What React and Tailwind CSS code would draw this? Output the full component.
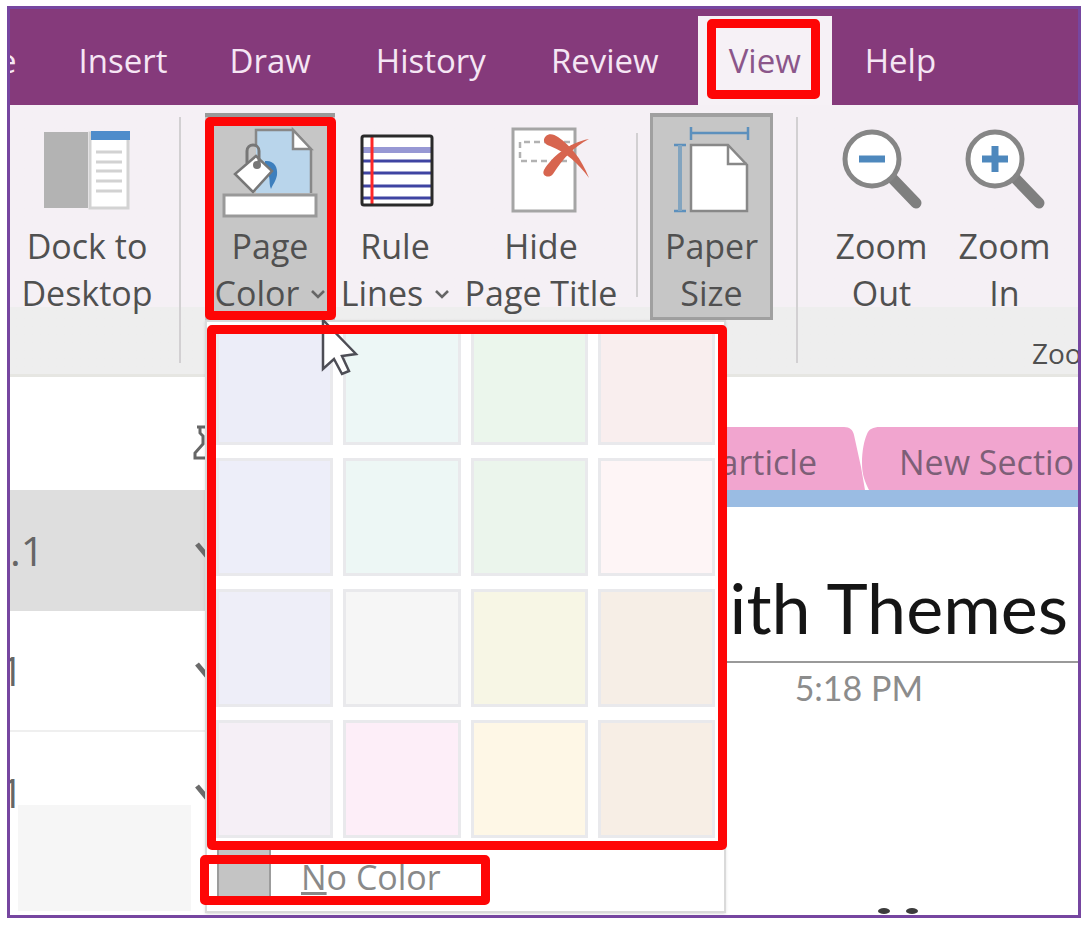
const SWATCHES = [
  ["Blue", "bg-[#ecedf8]"],
  ["Teal", "bg-[#edf7f6]"],
  ["Green", "bg-[#ebf6ec]"],
  ["Red", "bg-[#f9eeee]"],
  ["Indigo", "bg-[#edeef9]"],
  ["Cyan", "bg-[#edf7f5]"],
  ["Apple", "bg-[#ebf5ec]"],
  ["Rose", "bg-[#fef5f6]"],
  ["Lavender", "bg-[#eeeef8]"],
  ["Silver", "bg-[#f6f6f6]"],
  ["Lemon", "bg-[#f7f6e5]"],
  ["Tan", "bg-[#f6eee6]"],
  ["Purple", "bg-[#f5eff6]"],
  ["Magenta", "bg-[#fdeef8]"],
  ["Yellow", "bg-[#fef7e6]"],
  ["Orange", "bg-[#f7eee5]"],
];

const LABEL = "text-[34px] leading-[47px] whitespace-nowrap text-[#505050]";

function Highlight({ className }) {
  return (
    <span
      aria-hidden="true"
      className={`pointer-events-none absolute rounded-[5px] border-[9px] border-[#fe0606] ${className}`}
    />
  );
}

function Caret() {
  return (
    <svg className="ml-3 inline-block align-middle" width="14" height="14" viewBox="0 0 14 14" fill="none" stroke="#666" strokeWidth="2.6">
      <path d="M1 1l6 6 6-6" />
    </svg>
  );
}

function DockIcon() {
  return (
    <svg width="88" height="88" viewBox="0 0 88 88">
      <rect x="1" y="7" width="44" height="76" fill="#b3b3b3" />
      <rect x="47" y="8" width="38" height="75" fill="#fff" stroke="#d3d3d3" strokeWidth="3" />
      <rect x="48" y="6" width="39" height="9" fill="#4e8ccb" />
      <path d="M53 27h26M53 37h26M53 46h26M53 56h26M53 66h26" stroke="#d2d2d2" strokeWidth="3" />
    </svg>
  );
}

function PageColorIcon() {
  return (
    <svg width="96" height="94" viewBox="0 0 96 94" fill="none">
      <path d="M34 68V5h37l18 20v43z" fill="#b9d5eb" />
      <path d="M34 20V5h37l18 20v43" stroke="#888" strokeWidth="2.5" />
      <path d="M71 5v19h18z" fill="#fff" stroke="#888" strokeWidth="2.5" />
      <path d="M43 36c9-1 13 6 12 14-1 6-4 9-6 14-3-7 1-13-6-18z" fill="#3d7fbd" />
      <path d="M34 31L50 46 31 67 13 49z" fill="#fff" stroke="#777" strokeWidth="2.5" />
      <path d="M25 38V26c0-8 12-8 12 0v12" stroke="#777" strokeWidth="3" />
      <circle cx="35" cy="40" r="4" fill="#777" />
      <rect x="2" y="70" width="92" height="21" fill="#fff" stroke="#999" strokeWidth="3" />
    </svg>
  );
}

function RuleIcon() {
  return (
    <svg width="78" height="88" viewBox="-4 0 78 88" fill="none">
      <rect x="2" y="11" width="70" height="69" rx="2" fill="#fff" />
      <path d="M3 25h68" stroke="#9798d4" strokeWidth="6" />
      <path d="M3 36h68M3 48h68M3 61h68M3 73h68" stroke="#3f44a2" strokeWidth="3" />
      <path d="M12 11v69" stroke="#ff2727" strokeWidth="3" />
      <rect x="2" y="11" width="70" height="69" rx="2" stroke="#2a2a2a" strokeWidth="3" />
    </svg>
  );
}

function HideTitleIcon() {
  return (
    <svg width="101" height="92" viewBox="-19 0 101 92" fill="none">
      <rect x="3" y="4" width="62" height="82" fill="#fff" stroke="#a5a5a5" strokeWidth="3" />
      <path d="M60 17H10v19h50" stroke="#b2b2b2" strokeWidth="2.5" strokeDasharray="6 4" />
      <path d="M36 11c3-3 8-2 12 1 13 9 23 21 31 41C68 38 57 28 40 21c-6-2-8-6-4-10z" fill="#d7654f" />
      <path d="M79 14C64 22 54 32 43 49c-4 5-12 2-9-4 8-13 24-27 45-31z" fill="#d7654f" />
    </svg>
  );
}

function PaperSizeIcon() {
  return (
    <svg width="78" height="92" viewBox="0 0 78 92" fill="none">
      <g stroke="#5c90bd" strokeWidth="2.5">
        <path d="M18 8h57M18 2v13M75 2v13" />
        <path d="M1 20h12M1 86h12" />
      </g>
      <path d="M7 20v66" stroke="#82a4bf" strokeWidth="4" />
      <path d="M18 20h37l19 20v46H18z" fill="#fff" stroke="#888" strokeWidth="2.5" />
      <path d="M55 20v19h19" stroke="#888" strokeWidth="2.5" />
    </svg>
  );
}

function ZoomIcon({ plus }) {
  return (
    <svg width="84" height="88" viewBox="0 0 84 88" fill="none">
      <path d="M52 53l24 25" stroke="#7f7f7f" strokeWidth="11" strokeLinecap="round" />
      <circle cx="32" cy="34" r="27" fill="#fff" stroke="#868686" strokeWidth="5" />
      <path d="M19 34h26" stroke="#4e88bd" strokeWidth="7" />
      {plus && <path d="M32 21v26" stroke="#4e88bd" strokeWidth="7" />}
    </svg>
  );
}

function RibbonButton({ icon, lines, caret, className = "" }) {
  return (
    <button type="button" className={`flex shrink-0 flex-col items-center ${LABEL} ${className}`}>
      <span className="flex h-[106px] shrink-0 items-start pt-2">{icon}</span>
      <span>{lines[0]}</span>
      <span>
        {lines[1]}
        {caret && <Caret />}
      </span>
    </button>
  );
}

function Divider({ className }) {
  return <div className={`w-[2px] shrink-0 bg-[#d2d0d2] ${className}`} />;
}

function ColorMenu() {
  return (
    <div className="absolute top-full left-0 w-[521px] border-2 border-[#dadada] bg-white pt-[5px] shadow-sm">
      <div className="grid grid-cols-4 gap-x-[10px] gap-y-[13px] px-[9px]">
        {SWATCHES.map(([name, color]) => (
          <button key={name} type="button" aria-label={name} className={`h-[118px] border-[3px] border-[#e9e9ec] ${color}`} />
        ))}
      </div>
      <button type="button" className="mt-3 flex h-[61px] w-full items-start gap-[30px] pl-[10px] text-[34px] leading-[54px] text-[#898989]">
        <span className="h-[50px] w-[54px] border-x-2 border-[#9c9c9c] bg-[#c4c4c4]" />
        <span>
          <span className="underline decoration-3 underline-offset-2">N</span>o Color
        </span>
      </button>
      <svg className="absolute -top-[4px] left-[114px]" width="38" height="60" viewBox="0 0 38 60">
        <path d="M2 2v49l11-10 8 15 7-3-7-15 14-2z" fill="#fff" stroke="#4d4d55" strokeWidth="2.5" />
      </svg>
      <Highlight className="top-[3px] -right-[3px] left-0 h-[525px]" />
      <Highlight className="top-[533px] -left-[7px] h-[50px] w-[290px]" />
    </div>
  );
}

function PageRow({ label, className, labelClass }) {
  return (
    <li className={`flex h-[121px] items-center justify-between ${className}`}>
      <a href="#page" className={`text-[41px] text-[#666] ${labelClass}`}>{label}</a>
      <svg className="-mr-3 shrink-0" width="24" height="22" viewBox="0 0 24 22" fill="none" stroke="#6b6b6b" strokeWidth="5">
        <path d="M2 4l10 12L22 4" />
      </svg>
    </li>
  );
}

export default function App() {
  return (
    <div className="flex min-h-screen bg-white px-[7px] pt-1.5 pb-2 font-['Open_Sans','Noto_Sans',sans-serif]">
      <div className="flex min-w-0 flex-1 flex-col overflow-hidden border-[3px] border-[#7646a0]">
        <nav className="flex h-24 shrink-0 items-end bg-[#853a7b] text-[33px] whitespace-nowrap text-[#f5e6f4]">
          <a href="#home" className="-ml-3 flex h-[89px] items-center">e</a>
          <a href="#insert" className="ml-[62px] flex h-[89px] items-center">Insert</a>
          <a href="#draw" className="ml-[62px] flex h-[89px] items-center">Draw</a>
          <a href="#history" className="ml-[65px] flex h-[89px] items-center">History</a>
          <a href="#review" className="ml-[65px] flex h-[89px] items-center">Review</a>
          <a href="#view" className="relative ml-[39px] flex h-[89px] w-[134px] items-center justify-center bg-[#f6f1f6] text-[#8b568a]">
            View
            <Highlight className="top-[3px] right-3 bottom-1.5 left-[9px]" />
          </a>
          <a href="#help" className="ml-[33px] flex h-[89px] items-center">Help</a>
        </nav>

        <section className="relative z-10 flex h-[272px] shrink-0 border-b-[3px] border-[#e6e6e2] bg-linear-to-b from-[#f5f0f5] from-75% to-[#eeeeee] to-75%">
          <RibbonButton className="mt-3 w-[154px]" icon={<DockIcon />} lines={["Dock to", "Desktop"]} />
          <Divider className="mt-3 ml-[15px] h-[246px]" />
          <div className="relative mt-2 ml-6 h-[207px] w-[130px] shrink-0">
            <RibbonButton className="h-full w-full border-t-4 border-[#999] bg-[#c6c6c6]" icon={<PageColorIcon />} lines={["Page", "Color"]} caret />
            <ColorMenu />
            <Highlight className="top-1 -right-[1px] bottom-0 left-0" />
          </div>
          <RibbonButton className="mt-3 ml-1 w-[112px]" icon={<RuleIcon />} lines={["Rule", "Lines"]} caret />
          <RibbonButton className="mt-3 ml-3 w-[156px]" icon={<HideTitleIcon />} lines={["Hide", "Page Title"]} />
          <Divider className="mt-7 ml-[17px] h-[164px]" />
          <RibbonButton className="mt-2 ml-3 h-[207px] w-[123px] border-3 border-t-4 border-[#a0a0a0] bg-[#c6c6c6]" icon={<PaperSizeIcon />} lines={["Paper", "Size"]} />
          <Divider className="mt-3 ml-[23px] h-[246px]" />
          <div className="flex min-w-0 flex-1 flex-col">
            <div className="mt-3 ml-[22px] flex">
              <RibbonButton className="w-[123px]" icon={<ZoomIcon />} lines={["Zoom", "Out"]} />
              <RibbonButton className="w-[123px]" icon={<ZoomIcon plus />} lines={["Zoom", "In"]} />
            </div>
            <div className="mt-[18px] w-[46px] self-end overflow-hidden text-[28px] leading-9 text-[#505050]">Zoom</div>
          </div>
        </section>

        <div className="flex min-h-0 flex-1">
          <aside className="flex w-[197px] shrink-0 flex-col">
            <div className="flex h-[113px] items-end justify-end pb-3">
              <svg className="-mr-6" width="38" height="54" viewBox="0 0 38 54" fill="none" stroke="#666" strokeWidth="3">
                <path d="M4 3h30M7 3v6l3 3v8l-8 9v5h32v-5l-8-9v-8l3-3V3M18 34v18" />
              </svg>
            </div>
            <ul>
              <PageRow label=".1" className="bg-[#dedede]" labelClass="" />
              <PageRow label="1" className="border-b-2 border-[#efefef]" labelClass="-ml-2.5" />
              <PageRow label="1" className="" labelClass="-ml-2.5" />
            </ul>
            <div className="mr-4 -mt-12 mb-1 ml-2 flex-1 bg-[#f6f6f6]" />
          </aside>

          <main className="flex min-w-0 flex-1 flex-col">
            <div className="mt-[50px] flex h-[63px] shrink-0 justify-end text-[34px] leading-[70px] whitespace-nowrap text-[#7d5f77]">
              <a href="#article" className="flex-1 bg-[#f1a5cf] pr-[27px] text-right">article</a>
              <svg className="shrink-0 bg-[#f1a5cf]" width="36" height="63" viewBox="0 0 36 63">
                <path d="M0 0c6 0 9 3 10 8l7 32 4 23h4c-4-8-7-15-7-27s2-22 5-29c2-5 6-7 13-7z" fill="#fff" />
              </svg>
              <a href="#new-section" className="w-[198px] shrink-0 overflow-hidden bg-[#f1a5cf] pl-[19px]">New Sectio</a>
            </div>
            <div className="h-[17px] shrink-0 bg-[#9abce3]" />
            <h1 className="mt-[62px] pr-2.5 text-right font-[Lato,sans-serif] text-[70px] leading-[76px] whitespace-nowrap text-[#151515]">ith Themes</h1>
            <div className="mt-4 h-[2px] shrink-0 bg-[#999]" />
            <time className="mt-0.5 pr-[155px] text-right font-[Lato,sans-serif] text-[34px] leading-[46px] text-[#8c8c8c]">5:18 PM</time>
            <svg className="mt-auto mr-[158px] shrink-0 self-end" width="42" height="9" viewBox="0 0 42 9" fill="#3c3c3c">
              <ellipse cx="6" cy="5" rx="6" ry="3" />
              <ellipse cx="34" cy="5" rx="6" ry="3" />
            </svg>
          </main>
        </div>
      </div>
    </div>
  );
}
